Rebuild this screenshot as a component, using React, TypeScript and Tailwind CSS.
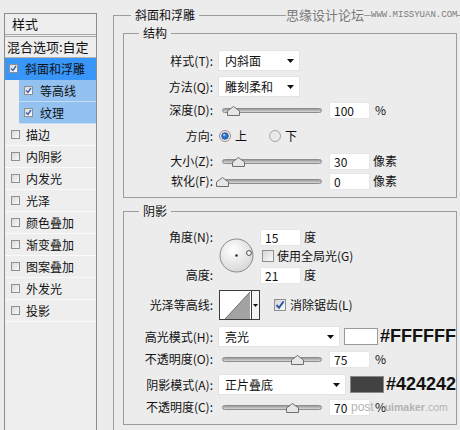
import React from 'react';

const effects = ['描边', '内阴影', '内发光', '光泽', '颜色叠加', '渐变叠加', '图案叠加', '外发光', '投影'];

// small square box used in the style list on the left
const ListCheck: React.FC<{ checked?: boolean }> = ({ checked }) => (
  <span className="w-[9px] h-[9px] shrink-0 border border-[#8f8f8f] bg-linear-to-br from-[#d9d9d9] to-[#fafafa] flex items-center justify-center">
    {checked && (
      <svg width="7" height="7" viewBox="0 0 7 7" aria-hidden="true">
        <path d="M1 3.5 L3 5.5 L6 1" fill="none" stroke="#3a62b0" strokeWidth="1.4" />
      </svg>
    )}
  </span>
);

const CheckBox: React.FC<{ checked?: boolean; className?: string }> = ({ checked, className }) => (
  <span
    className={`w-[12px] h-[12px] shrink-0 border border-[#8e8f8f] bg-linear-to-br from-[#d6d6d6] to-[#fbfbfb] flex items-center justify-center ${className ?? ''}`}
  >
    {checked && (
      <svg width="10" height="10" viewBox="0 0 10 10" aria-hidden="true">
        <path d="M1.5 5 L4 7.8 L8.6 1.4" fill="none" stroke="#2f56a8" strokeWidth="1.9" />
      </svg>
    )}
  </span>
);

const Radio: React.FC<{ checked?: boolean; className?: string }> = ({ checked, className }) => (
  <svg className={className} width="12" height="12" viewBox="0 0 12 12" aria-hidden="true">
    <circle cx="6" cy="6" r="5.5" fill={checked ? '#efe9e9' : '#e9e9e9'} stroke={checked ? '#a08e8e' : '#a5a5a5'} />
    {checked && <circle cx="6" cy="6" r="3.3" fill="#2b74cc" stroke="#1b4f94" strokeWidth="0.8" />}
    {checked && <circle cx="5.2" cy="5" r="1.2" fill="#8fc3f5" />}
  </svg>
);

const Select: React.FC<{ value: string; className: string }> = ({ value, className }) => (
  <div className={`h-full bg-white border border-[#e3e3e3] flex items-center justify-between pl-[6px] pr-[5px] ${className}`}>
    <span>{value}</span>
    <svg width="7" height="4" viewBox="0 0 7 4" aria-hidden="true">
      <path d="M0 0 H7 L3.5 4 Z" fill="#111" />
    </svg>
  </div>
);

const Field: React.FC<{ value: string; className?: string }> = ({ value, className }) => (
  <div className={`w-[41px] h-[17px] bg-white border border-[#e6e6e6] pl-[4px] leading-[15px] ${className ?? ''}`}>{value}</div>
);

// track with the little house shaped thumb, pos = px from left end
const Slider: React.FC<{ pos: number }> = ({ pos }) => (
  <div className="relative ml-[9px] w-[100px] h-[18px] flex items-center">
    <div className="w-full h-[5px] rounded-full border border-[#8d8d8d] bg-linear-to-b from-[#9a9a9a] to-[#d8d8d8]" />
    <svg className="absolute top-[5px]" style={{ left: pos - 6 }} width="13" height="10" viewBox="0 0 13 10" aria-hidden="true">
      <path d="M6.5 0.5 L12.5 5 L12.5 9.5 L0.5 9.5 L0.5 5 Z" fill="#e6e6e6" stroke="#6f6f6f" />
    </svg>
  </div>
);

const Row: React.FC<{ label: string; className: string; children: React.ReactNode }> = ({ label, className, children }) => (
  <div className={`flex items-center ${className}`}>
    <span className="w-[89px] shrink-0 text-right whitespace-nowrap">{label}</span>
    {children}
  </div>
);

const Legend: React.FC<{ children: React.ReactNode; className: string }> = ({ children, className }) => (
  <div className={`-mt-[9px] w-fit px-[4px] bg-[#ececec] leading-[16px] ${className}`}>{children}</div>
);

const AngleDial: React.FC = () => (
  <svg className="ml-[6px] mt-[10px] shrink-0" width="35" height="35" viewBox="0 0 35 35" aria-hidden="true">
    <defs>
      <radialGradient id="dial" cx="0.4" cy="0.35" r="0.7">
        <stop offset="0" stopColor="#ffffff" />
        <stop offset="1" stopColor="#d6d6d6" />
      </radialGradient>
    </defs>
    <circle cx="17.5" cy="17.5" r="16.5" fill="url(#dial)" stroke="#8a8a8a" />
    <circle cx="17.5" cy="17.5" r="1.3" fill="#333" />
    <circle cx="30" cy="15" r="2.4" fill="#fff" stroke="#333" strokeWidth="0.9" />
  </svg>
);

const Contour: React.FC = () => (
  <div className="ml-[6px] h-[30px] w-[41px] flex border border-[#3c3c3c] bg-white">
    <svg width="31" height="28" viewBox="0 0 31 28" aria-hidden="true">
      <path d="M5 28 L30 1 L30 28 Z" fill="#a3a3a3" />
      <path d="M5 28 L30 1" stroke="#555" strokeWidth="0.8" />
    </svg>
    <div className="flex-1 border-l border-[#3c3c3c] bg-[#f4f4f4] flex items-center justify-center">
      <svg width="5" height="3" viewBox="0 0 5 3" aria-hidden="true">
        <path d="M0 0 H5 L2.5 3 Z" fill="#111" />
      </svg>
    </div>
  </div>
);

export default function App() {
  return (
    <div className="w-[460px] h-[430px] overflow-hidden bg-[#ececec] flex items-start text-[12px] text-[#111] font-['Noto_Sans_CJK_SC','Noto_Sans',sans-serif]">
      {/* style list */}
      <aside className="mt-[13px] ml-[4px] w-[93px] h-[430px] shrink-0 border border-[#8b8b8b] bg-[#eeeeee]">
        <div className="h-[23px] border-b-[3px] border-double border-[#a8a8a8] pl-[7px] leading-[20px] text-[13px]">样式</div>
        <div className="h-[21px] border-b border-[#b5b5b5] pl-[2px] leading-[20px] text-[13px] whitespace-nowrap">混合选项:自定</div>
        <div className="h-[22px] bg-[#3896f8] border-b border-[#3896f8] flex items-center pl-[4px]">
          <ListCheck checked />
          <span className="ml-[7px]">斜面和浮雕</span>
        </div>
        {['等高线', '纹理'].map(name => (
          <div key={name} className="ml-[14px] h-[22px] bg-[#93c2f1] border-b border-[#c4dcf4] flex items-center pl-[5px]">
            <ListCheck checked />
            <span className="ml-[7px]">{name}</span>
          </div>
        ))}
        {effects.map(name => (
          <div key={name} className="h-[22px] border-b border-[#fafafa] flex items-center pl-[6px]">
            <ListCheck />
            <span className="ml-[6px]">{name}</span>
          </div>
        ))}
      </aside>

      {/* bevel and emboss options */}
      <main className="relative ml-[16px] mt-[15px] flex-1 h-[430px] border-l border-t border-[#9c9c9c]">
        <Legend className="ml-[17px]">斜面和浮雕</Legend>
        <div className="absolute left-[172px] -top-[9px] h-[16px] flex items-center text-[#7b7b7b] whitespace-nowrap">
          <span className="bg-[#ececec] text-[13px] leading-[16px]">思缘设计论坛</span>
          <span className="ml-[7px] bg-[#ececec] text-[9px] leading-[16px] font-['Liberation_Mono',monospace]">WWW.MISSYUAN.COM</span>
        </div>

        <section className="ml-[9px] mt-[10px] w-[334px] border border-[#9c9c9c] pb-[7px]">
          <Legend className="ml-[15px]">结构</Legend>
          <Row label="样式(T):" className="mt-[9px] h-[21px]">
            <Select value="内斜面" className="ml-[5px] w-[82px]" />
          </Row>
          <Row label="方法(Q):" className="mt-[5px] h-[21px]">
            <Select value="雕刻柔和" className="ml-[5px] w-[82px]" />
          </Row>
          <Row label="深度(D):" className="mt-[4px] h-[18px]">
            <Slider pos={11} />
            <Field value="100" className="ml-[7px]" />
            <span className="ml-[5px]">%</span>
          </Row>
          <Row label="方向:" className="mt-[8px] h-[18px]">
            <Radio checked className="ml-[6px]" />
            <span className="ml-[4px]">上</span>
            <Radio className="ml-[22px]" />
            <span className="ml-[4px]">下</span>
          </Row>
          <Row label="大小(Z):" className="mt-[7px] h-[18px]">
            <Slider pos={16} />
            <Field value="30" className="ml-[7px]" />
            <span className="ml-[3px]">像素</span>
          </Row>
          <Row label="软化(F):" className="mt-[2px] h-[18px]">
            <Slider pos={0} />
            <Field value="0" className="ml-[7px]" />
            <span className="ml-[3px]">像素</span>
          </Row>
        </section>

        <section className="ml-[9px] mt-[13px] w-[334px] border border-[#9c9c9c] pb-[8px]">
          <Legend className="ml-[15px]">阴影</Legend>
          <div className="mt-[9px] flex">
            <div className="w-[89px] h-[56px] shrink-0 flex flex-col justify-between text-right">
              <span className="leading-[18px]">角度(N):</span>
              <span className="leading-[18px]">高度:</span>
            </div>
            <AngleDial />
            <div className="ml-[6px] flex flex-col">
              <div className="h-[18px] flex items-center">
                <Field value="15" />
                <span className="ml-[3px]">度</span>
              </div>
              <div className="h-[20px] flex items-center">
                <CheckBox className="ml-[2px]" />
                <span className="ml-[3px] whitespace-nowrap">使用全局光(G)</span>
              </div>
              <div className="h-[18px] flex items-center">
                <Field value="21" />
                <span className="ml-[3px]">度</span>
              </div>
            </div>
          </div>
          <Row label="光泽等高线:" className="mt-[6px] h-[30px]">
            <Contour />
            <CheckBox checked className="ml-[14px]" />
            <span className="ml-[4px] whitespace-nowrap">消除锯齿(L)</span>
          </Row>
          <Row label="高光模式(H):" className="mt-[6px] h-[21px]">
            <Select value="亮光" className="ml-[5px] w-[132px]" />
            <div className="ml-[4px] w-[34px] h-[17px] shrink-0 bg-white border border-[#9a9a9a]" />
            <span className="ml-[2px] text-[18px] font-bold font-['Liberation_Sans',Arial,sans-serif] whitespace-nowrap">#FFFFFF</span>
          </Row>
          <Row label="不透明度(O):" className="mt-[3px] h-[18px]">
            <Slider pos={75} />
            <Field value="75" className="ml-[7px]" />
            <span className="ml-[5px]">%</span>
          </Row>
          <Row label="阴影模式(A):" className="mt-[6px] h-[21px]">
            <Select value="正片叠底" className="ml-[5px] w-[132px]" />
            <div className="ml-[4px] w-[34px] h-[17px] shrink-0 bg-[#424242] border border-[#8a8a8a]" />
            <span className="ml-[2px] text-[18px] font-bold font-['Liberation_Sans',Arial,sans-serif] whitespace-nowrap">#424242</span>
          </Row>
          <Row label="不透明度(C):" className="relative mt-[3px] h-[18px]">
            <Slider pos={70} />
            <Field value="70" className="ml-[7px]" />
            <span className="ml-[5px]">%</span>
            <span className="absolute left-[227px] top-[-1px] flex items-baseline gap-[11px] text-[12px] leading-[20px] text-[#b3b3b3] font-['Liberation_Sans',Arial,sans-serif] whitespace-nowrap">
              <span>post</span>
              <span className="text-[10.5px]">
                <span className="font-bold">uimaker</span>.com
              </span>
            </span>
          </Row>
        </section>
      </main>
    </div>
  );
}
